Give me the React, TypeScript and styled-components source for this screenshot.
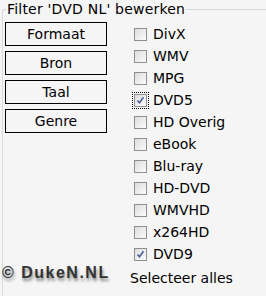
import React, { useState } from "react";
import styled, { createGlobalStyle } from "styled-components";

const GlobalStyle = createGlobalStyle`
    html, body {
        margin: 0;
        padding: 0;
        background: #f5f5f5;
        overflow: hidden;
    }
    body {
        font-family: "DejaVu Sans", "Noto Sans", sans-serif;
        color: #000;
    }
`;

const SPage = styled.div`
    position: relative;
    width: 266px;
    height: 296px;
    padding: 1px 0 0 2px;
    box-sizing: border-box;
    overflow: hidden;
`;

const SFieldset = styled.fieldset`
    margin: 0;
    padding: 5px 0 0 2px;
    height: 295px;
    box-sizing: border-box;
    border: 1px solid #d3dbe1;
    border-right: none;
    border-bottom: none;
    border-radius: 3px 0 0 0;
`;

const SLegend = styled.legend`
    padding: 0 1px;
    margin-left: 1px;
    font-size: 14px;
    letter-spacing: 0.2px;
    line-height: 16px;
`;

const SContent = styled.div`
    display: flex;
    align-items: flex-start;
    gap: 26px;
`;

const SButtonColumn = styled.div`
    display: flex;
    flex-direction: column;
    gap: 5px;
`;

const SButton = styled.button`
    width: 102px;
    height: 24px;
    padding: 0;
    margin: 0;
    background: transparent;
    border: 1px solid #000;
    font-family: inherit;
    font-size: 14px;
    color: #000;
    cursor: pointer;
`;

const SCheckList = styled.div`
    display: flex;
    flex-direction: column;
    padding-top: 1px;
`;

const SCheckRow = styled.label`
    display: flex;
    align-items: center;
    gap: 5px;
    height: 22px;
    font-size: 14px;
    cursor: pointer;
`;

const SBoxWrap = styled.span<{ $focus?: boolean }>`
    display: flex;
    align-items: center;
    justify-content: center;
    width: 15px;
    height: 15px;
    outline: ${(p) => (p.$focus ? "1px dotted #000" : "none")};
    outline-offset: 0;
`;

const SBox = styled.span`
    display: flex;
    align-items: center;
    justify-content: center;
    width: 11px;
    height: 11px;
    border: 1px solid #8e8f8f;
    background: linear-gradient(135deg, #dcdcdc 0%, #f2f2f2 70%, #ffffff 100%);
`;

const SSelectAll = styled.div`
    font-size: 14px;
    margin-top: 5px;
    margin-left: -3px;
    cursor: pointer;
`;

const SCopyright = styled.div`
    position: absolute;
    left: 2px;
    top: 264px;
    font-family: "Liberation Sans", Arial, sans-serif;
    font-weight: bold;
    font-size: 16px;
    letter-spacing: 1.5px;
    color: #333;
    text-shadow: 1px 3px 3px rgba(0, 0, 0, 0.45);
`;

const formats = ["DivX", "WMV", "MPG", "DVD5", "HD Overig", "eBook", "Blu-ray", "HD-DVD", "WMVHD", "x264HD", "DVD9"];

const Check = () => (
    <svg width="9" height="9" viewBox="0 0 9 9">
        <path d="M1.5 4.5 L3.5 6.8 L7.5 1.2" fill="none" stroke="#4b5d9a" strokeWidth="1.6" />
    </svg>
);

const App = () => {
    const [checked, setChecked] = useState<string[]>(["DVD5", "DVD9"]);

    const toggle = (name: string) => () => {
        setChecked((prev) => (prev.includes(name) ? prev.filter((n) => n !== name) : [...prev, name]));
    };

    return (
        <SPage>
            <GlobalStyle />
            <SFieldset>
                <SLegend>Filter 'DVD NL' bewerken</SLegend>
                <SContent>
                    <SButtonColumn>
                        <SButton>Formaat</SButton>
                        <SButton>Bron</SButton>
                        <SButton>Taal</SButton>
                        <SButton>Genre</SButton>
                    </SButtonColumn>
                    <SCheckList>
                        {formats.map((f) => (
                            <SCheckRow key={f} onClick={toggle(f)}>
                                <SBoxWrap $focus={f === "DVD5"}>
                                    <SBox>{checked.includes(f) && <Check />}</SBox>
                                </SBoxWrap>
                                {f}
                            </SCheckRow>
                        ))}
                        <SSelectAll onClick={() => setChecked(formats)}>Selecteer alles</SSelectAll>
                    </SCheckList>
                </SContent>
            </SFieldset>
            <SCopyright>© DukeN.NL</SCopyright>
        </SPage>
    );
};

export default App;
